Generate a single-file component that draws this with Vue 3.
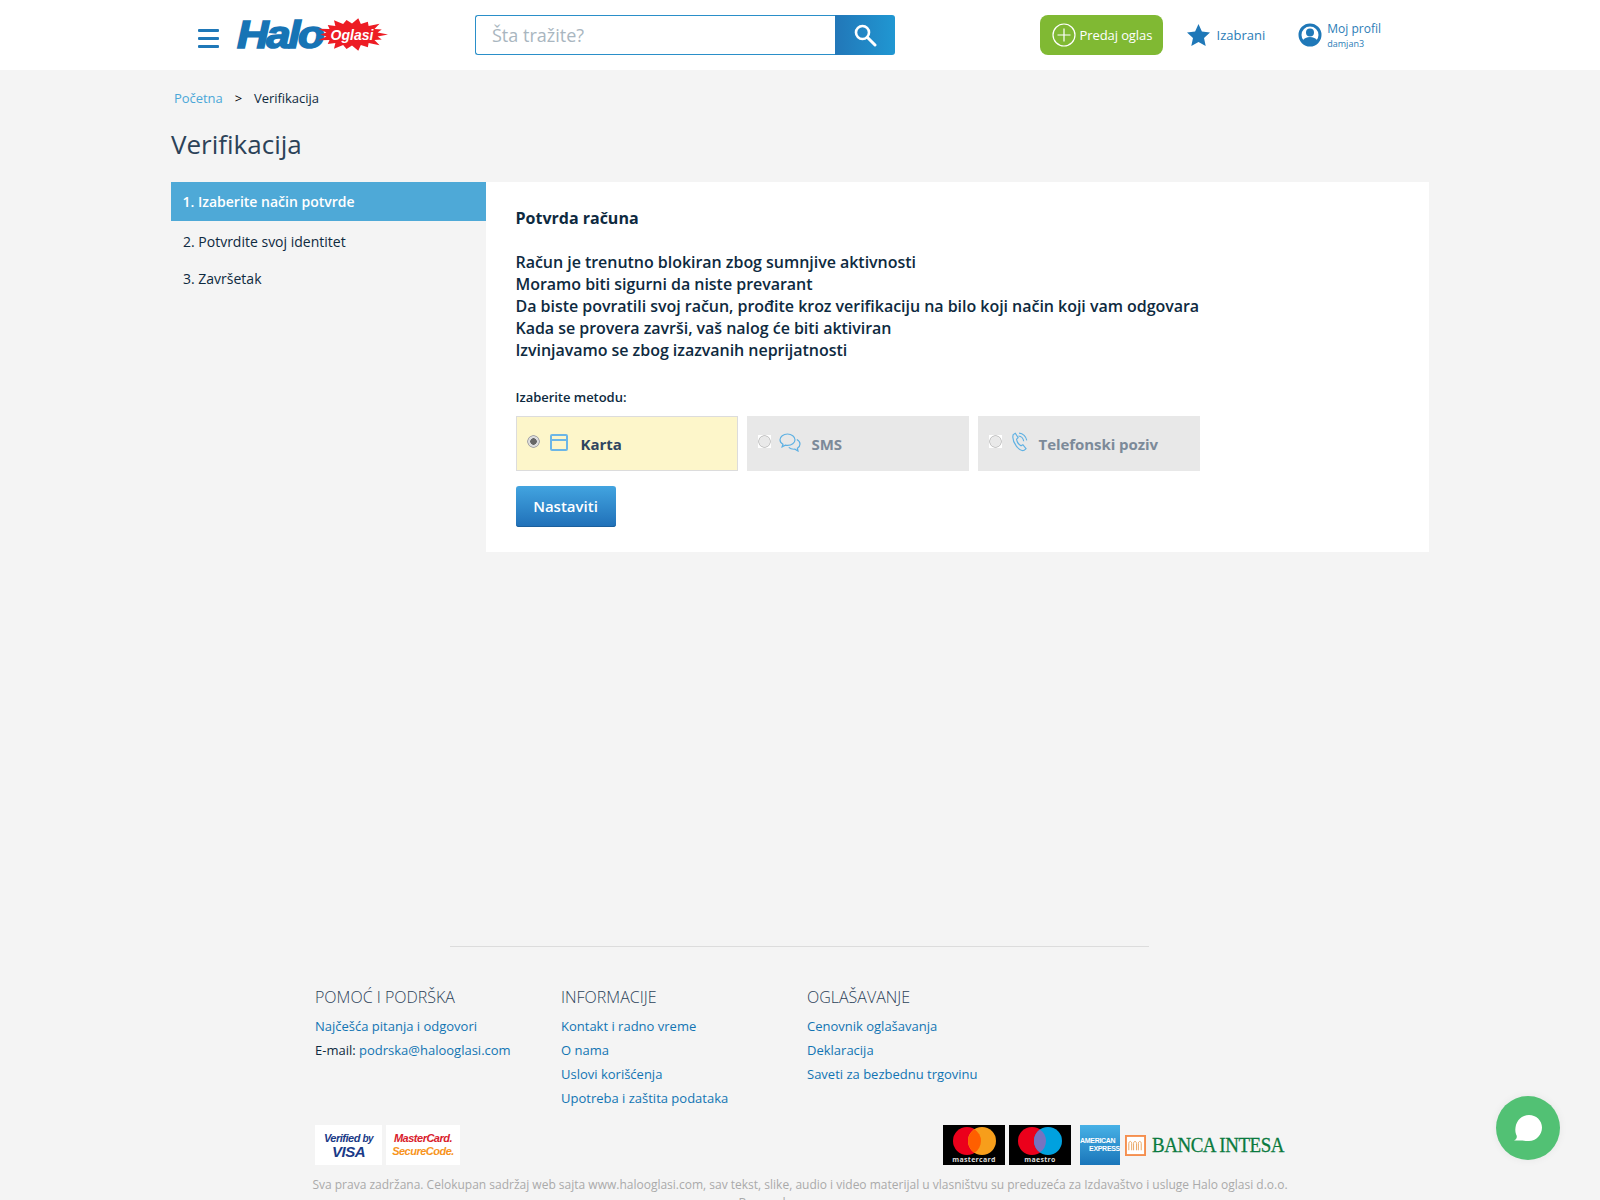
<script setup>
const steps = ['1. Izaberite način potvrde', '2. Potvrdite svoj identitet', '3. Završetak']
const lines = [
  'Račun je trenutno blokiran zbog sumnjive aktivnosti',
  'Moramo biti sigurni da niste prevarant',
  'Da biste povratili svoj račun, prođite kroz verifikaciju na bilo koji način koji vam odgovara',
  'Kada se provera završi, vaš nalog će biti aktiviran',
  'Izvinjavamo se zbog izazvanih neprijatnosti'
]
const burst = (() => {
  const cx = 50, cy = 19, n = 18, pts = []
  for (let i = 0; i < n * 2; i++) {
    const a = (Math.PI * i) / n
    const outer = i % 2 === 0
    const rx = outer ? 50 - (i % 4 === 0 ? 0 : 6) : 36
    const ry = outer ? 18 - (i % 4 === 0 ? 0 : 2) : 12
    pts.push(`${(cx + rx * Math.cos(a)).toFixed(1)},${(cy + ry * Math.sin(a)).toFixed(1)}`)
  }
  return pts.join(' ')
})()
</script>

<template>
  <div class="page">
    <header class="header">
      <div class="logo-side">
        <div class="burger"><i></i><i></i><i></i></div>
        <div class="logo">
          <span class="halo">Halo</span>
          <span class="burst">
            <svg width="72" height="35" viewBox="0 0 100 38" preserveAspectRatio="none"><polygon :points="burst" fill="#ed1c24"/></svg>
            <em>Oglasi</em>
          </span>
        </div>
      </div>
      <div class="search">
        <div class="search-input">Šta tražite?</div>
        <div class="search-btn">
          <svg width="24" height="24" viewBox="0 0 24 24" fill="none" stroke="#fff"><circle cx="9.5" cy="9.5" r="6.5" stroke-width="2.6"/><path d="M14.5 14.5 22 22" stroke-width="3" stroke-linecap="round"/></svg>
        </div>
      </div>
      <div class="actions">
        <div class="post">
          <svg width="24" height="24" viewBox="0 0 24 24" fill="none" stroke="#fff" stroke-width="1.2"><circle cx="12" cy="12" r="11"/><path d="M12 5.5v13M5.5 12h13"/></svg>
          <span>Predaj oglas</span>
        </div>
        <div class="fav">
          <svg width="25" height="24" viewBox="0 0 25 24"><path d="M12.5 1l3.4 7.6 8.1.9-6 5.500 1.700 8.100-7.200-4.200-7.200 4.200 1.700-8.100-6-5.500 8.100-.9z" fill="#1f78b8"/></svg>
          <span>Izabrani</span>
        </div>
        <div class="profile">
          <svg width="24" height="24" viewBox="0 0 24 24"><circle cx="12" cy="12" r="10" fill="none" stroke="#1f78b8" stroke-width="3"/><circle cx="12" cy="9.500" r="4" fill="#1f78b8"/><path d="M4.500 18c1.500-3 4.500-4 7.500-4s6 1 7.500 4c-2 2.500-4.500 4-7.500 4s-5.500-1.500-7.500-4z" fill="#1f78b8"/></svg>
          <div class="profile-text">
            <span>Moj profil</span>
            <small>damjan3</small>
          </div>
        </div>
      </div>
    </header>

    <div class="container">
      <nav class="crumbs"><a>Početna</a><b>&gt;</b><span>Verifikacija</span></nav>
      <h1>Verifikacija</h1>
      <div class="columns">
        <aside class="steps">
          <div v-for="(s, i) in steps" :key="s" class="step" :class="{ active: i === 0 }">{{ s }}</div>
        </aside>
        <main class="card">
          <h2>Potvrda računa</h2>
          <div class="message">
            <p v-for="l in lines" :key="l">{{ l }}</p>
          </div>
          <div class="method-label">Izaberite metodu:</div>
          <div class="methods">
            <div class="method selected">
              <span class="radio"></span>
              <svg class="ico" width="18" height="17" viewBox="0 0 18 17" fill="none" stroke="#6cb6e6" stroke-width="2"><rect x="1" y="1" width="16" height="15" rx="1"/><path d="M1 6h16" stroke-width="2"/></svg>
              <strong>Karta</strong>
            </div>
            <div class="method">
              <span class="radio"></span>
              <svg class="ico" width="22" height="19" viewBox="0 0 22 19" fill="none" stroke="#5fb1e3" stroke-width="1.200"><path d="M8.500 1C4.400 1 1 3.500 1 6.700c0 1.900 1.200 3.600 3 4.600l-.9 2.600 3.300-1.700c.7.100 1.400.2 2.100.2 4.100 0 7.500-2.500 7.500-5.700S12.600 1 8.500 1z"/><path d="M17.800 6.500c1.900 1 3.200 2.600 3.200 4.500 0 1.700-1 3.200-2.600 4.200l.6 2.800-3.100-1.800c-2.500.2-4.700-.5-6.100-1.900"/></svg>
              <strong>SMS</strong>
            </div>
            <div class="method">
              <span class="radio"></span>
              <svg class="ico" width="19" height="20" viewBox="0 0 18 19" fill="none" stroke="#5fb1e3" stroke-width="1.100"><path d="M3 2.500 5 1.200l2.700 4.100-1.500 1.500c.3 2.300 2 5 4.200 6.300l1.800-1 3 3.700-1.800 1.600C9.500 19 1 10 3 2.500z"/><path d="M8 3.800c2.500.2 4.600 2.400 5 5M8.600 1c3.700.2 6.700 3.400 7.300 7"/></svg>
              <strong>Telefonski poziv</strong>
            </div>
          </div>
          <button class="next">Nastaviti</button>
        </main>
      </div>
    </div>

    <footer class="footer">
      <div class="rule"></div>
      <div class="foot-cols">
        <div class="foot-col">
          <h3>POMOĆ I PODRŠKA</h3>
          <a>Najčešća pitanja i odgovori</a>
          <p>E-mail: <a>podrska@halooglasi.com</a></p>
        </div>
        <div class="foot-col">
          <h3>INFORMACIJE</h3>
          <a>Kontakt i radno vreme</a>
          <a>O nama</a>
          <a>Uslovi korišćenja</a>
          <a>Upotreba i zaštita podataka</a>
        </div>
        <div class="foot-col">
          <h3>OGLAŠAVANJE</h3>
          <a>Cenovnik oglašavanja</a>
          <a>Deklaracija</a>
          <a>Saveti za bezbednu trgovinu</a>
        </div>
      </div>
      <div class="badges">
        <div class="badge-group">
          <div class="badge visa"><span>Verified <i>by</i></span><b>VISA</b></div>
          <div class="badge securecode"><span>MasterCard.</span><b>SecureCode.</b></div>
        </div>
        <div class="badge-group right">
          <div class="card-logo">
            <svg width="62" height="28" viewBox="0 0 62 28"><circle cx="24" cy="14" r="14" fill="#eb001b"/><circle cx="39" cy="14" r="14" fill="#f79e1b"/><path d="M31.500 2.200A14 14 0 0 1 31.500 25.800 14 14 0 0 1 31.500 2.200z" fill="#ff5f00"/></svg>
            <span>mastercard</span>
          </div>
          <div class="card-logo">
            <svg width="62" height="28" viewBox="0 0 62 28"><circle cx="23" cy="14" r="14" fill="#eb001b"/><circle cx="39" cy="14" r="14" fill="#00a1df"/><path d="M31 2.500A14 14 0 0 1 31 25.500 14 14 0 0 1 31 2.500z" fill="#7673c0"/></svg>
            <span>maestro</span>
          </div>
          <div class="amex"><span>AMERICAN</span><span class="ex">EXPRESS</span></div>
          <div class="intesa">
            <svg width="21" height="21" viewBox="0 0 22 22" fill="none"><rect x="1" y="1" width="20" height="20" fill="#fff" stroke="#f58f4f" stroke-width="2"/><path d="M4 16V9c0-3 3-3 3 0v7M9 16V9c0-3 3-3 3 0v7M14 16V9c0-3 3-3 3 0v7" stroke="#e9a25c" stroke-width="1"/></svg>
            <span>BANCA INTESA</span>
          </div>
        </div>
      </div>
      <p class="legal">Sva prava zadržana. Celokupan sadržaj web sajta www.halooglasi.com, sav tekst, slike, audio i video materijal u vlasništvu su preduzeća za Izdavaštvo i usluge Halo oglasi d.o.o. Beograd<span class="legal-tail"></span></p>
    </footer>

    <div class="chat">
      <svg width="28" height="26" viewBox="0 0 28 26"><path d="M15 0c7 0 13 5.300 13 12.500S22 26 15 26c-2 0-4.500 0-6.500-.5H0c2-1 3-2 2.800-4.500C1.500 18.500 1 15.500 1.500 12.500 2.500 5 8 0 15 0z" fill="#fff"/></svg>
    </div>
  </div>
</template>

<style>
html, body { margin: 0; background: #f4f4f4; }
</style>

<style scoped>
.page {
  font-family: "Open Sans", "Noto Sans", sans-serif;
  color: #0e2a40;
  background: #f4f4f4;
  font-size: 14px;
}
.header {
  height: 70px;
  background: #fff;
  display: flex;
  align-items: center;
  padding: 0 219px 0 198px;
}
.logo-side { display: flex; align-items: center; gap: 18px; width: 277px; }
.burger { display: flex; flex-direction: column; gap: 5px; width: 21px; padding-top: 6px; }
.burger i { display: block; height: 3px; background: #1f78b8; border-radius: 1px; }
.logo { position: relative; display: flex; align-items: center; height: 36px; width: 152px; }
.halo {
  font-family: "Liberation Sans", sans-serif;
  font-weight: 700;
  font-style: italic;
  font-size: 38px;
  letter-spacing: -2px;
  color: #1774b5;
  -webkit-text-stroke: 1.600px #1774b5;
  transform: scaleX(1.15);
  transform-origin: left center;
}
.burst { position: absolute; left: 79px; top: 0; width: 72px; height: 35px; display: flex; align-items: center; justify-content: center; }
.burst svg { position: absolute; inset: 0; }
.burst em {
  position: relative;
  font-family: "Liberation Sans", sans-serif;
  font-weight: 700;
  font-size: 14px;
  color: #fff;
}
.search { display: flex; width: 420px; height: 40px; }
.search-input {
  flex: 1;
  border: 1px solid #2a8fc9;
  border-right: 0;
  border-radius: 3px 0 0 3px;
  background: #fff;
  color: #a9b6c0;
  font-size: 18px;
  line-height: 38px;
  padding-left: 16px;
}
.search-btn {
  width: 60px;
  display: flex;
  align-items: center;
  justify-content: center;
  background: linear-gradient(90deg, #2277b8, #2097d2);
  border-radius: 0 3px 3px 0;
}
.actions { display: flex; align-items: center; margin-left: auto; }
.post {
  display: flex;
  align-items: center;
  gap: 4px;
  width: 123px;
  height: 40px;
  box-sizing: border-box;
  padding-left: 12px;
  background: #80b933;
  border-radius: 8px;
  color: #fff;
  font-size: 13px;
  letter-spacing: -0.1px;
}
.fav { display: flex; align-items: center; gap: 6px; margin-left: 23px; color: #2b7cb6; font-size: 13px; }
.profile { display: flex; align-items: center; gap: 5px; margin-left: 33px; color: #2b7cb6; }
.profile-text { display: flex; flex-direction: column; font-size: 12px; line-height: 16px; }
.profile-text small { font-size: 9px; line-height: 12px; margin-top: 1px; }

.container { width: 1258px; margin-left: 171px; }
.crumbs { padding: 19px 0 0 3px; height: 18px; line-height: 18px; font-size: 13px; letter-spacing: -0.05px; display: flex; }
.crumbs a { color: #4ba7d8; }
.crumbs b { font-weight: 400; margin: 0 12px; color: #000; }
h1 { margin: 19px 0 0; font-size: 26px; line-height: 36px; font-weight: 400; color: #2c4258; height: 36px; }
.columns { display: flex; margin-top: 20px; }
.steps { width: 315px; }
.step { height: 37px; line-height: 37px; padding-left: 12px; font-size: 14px; }
.step.active { height: 39px; line-height: 39px; margin-bottom: 2px; padding-left: 11.500px; background: #4ea9d7; color: #fff; font-weight: 600; }
.card { flex: 1; height: 370px; box-sizing: border-box; background: #fff; padding: 25px 30px 25px 29.500px; }
h2 { margin: 0; font-size: 16px; line-height: 22px; font-weight: 700; color: #0e2a40; }
.message { margin-top: 22px; font-size: 16px; line-height: 22px; font-weight: 600; color: #0e2a40; letter-spacing: -0.035px; }
.message p { margin: 0; }
.method-label { margin-top: 27px; font-size: 13px; line-height: 18px; font-weight: 600; letter-spacing: -0.03px; }
.methods { display: flex; gap: 9px; margin-top: 10px; }
.method {
  position: relative;
  width: 222px;
  height: 55px;
  box-sizing: border-box;
  background: #e8e8e8;
  display: flex;
  align-items: center;
  color: #7c8a99;
  font-size: 15px;
}
.method.selected { background: #fdf6ca; border: 1px solid #dcdcdc; color: #2f4560; }
.radio {
  position: absolute;
  left: 11px;
  top: 19px;
  width: 13px;
  height: 13px;
  background: radial-gradient(circle, #e9e9e9 0 5px, #c9c9c9 5.500px 6px, #fff 6.500px);
}
.method.selected .radio {
  left: 10px;
  top: 18px;
  background: radial-gradient(circle, #666 0 3px, #dcdcdc 3.500px 5px, #aaa 5.500px 6px, #fdf6ca 6.500px);
}
.ico { position: absolute; left: 33px; top: 17px; }
.method strong { font-weight: 700; margin-left: 65px; letter-spacing: -0.05px; }
.method.selected strong { margin-left: 64px; }
.method:nth-child(3) strong { margin-left: 61px; }
.method:nth-child(3) .ico { left: 32px; top: 16px; }
.method:nth-child(2) .ico { left: 32px; top: 17px; }
.next {
  display: block;
  margin-top: 15px;
  width: 100px;
  height: 41px;
  padding: 0 0 2px;
  border: 0;
  border-radius: 3px;
  background: linear-gradient(180deg, #42a4e0, #2070b8);
  box-shadow: inset 0 -1px 0 #1b5f9c;
  color: #fff;
  font-family: inherit;
  font-size: 15px;
  font-weight: 600;
}

.footer { margin-top: 394px; padding-bottom: 20px; }
.rule { width: 699px; height: 1px; background: #dcdcdc; margin-left: 450px; }
.foot-cols { display: flex; margin: 39px 0 0 315px; }
.foot-col { width: 246px; display: flex; flex-direction: column; align-items: flex-start; font-size: 13px; line-height: 24px; }
.foot-col h3 { margin: 0 0 6px; font-size: 16px; line-height: 22px; font-weight: 300; color: #2c4258; }
.foot-col a { color: #1274b3; }
.foot-col p { margin: 0; }
.badges { display: flex; justify-content: space-between; margin: 15px 316px 0 315px; height: 40px; }
.badge-group { display: flex; gap: 4px; }
.badge-group.right { gap: 0; align-items: center; }
.badge {
  background: #fff;
  height: 40px;
  display: flex;
  flex-direction: column;
  align-items: center;
  justify-content: center;
  font-family: "Liberation Sans", sans-serif;
  font-style: italic;
  font-weight: 700;
  line-height: 13px;
}
.visa { width: 67px; font-size: 11px; color: #1a3a87; letter-spacing: -0.500px; }
.visa b { font-size: 15px; }
.visa i { font-size: 10px; }
.securecode { width: 74px; font-size: 11px; color: #d9202c; letter-spacing: -0.500px; }
.securecode b { color: #f7941d; }
.card-logo {
  width: 62px;
  height: 40px;
  box-sizing: border-box;
  padding-top: 2px;
  background: #000;
  display: flex;
  flex-direction: column;
  align-items: center;
  color: #ddd;
  font-size: 7px;
  line-height: 9px;
  font-weight: 700;
  letter-spacing: .3px;
  margin-right: 4px;
}
.amex {
  width: 40px;
  height: 40px;
  margin-left: 5px;
  background: linear-gradient(180deg, #47b1e6, #1a76ba);
  color: #fff;
  font-family: "Liberation Sans", sans-serif;
  font-size: 7px;
  line-height: 8px;
  font-weight: 700;
  display: flex;
  flex-direction: column;
  justify-content: center;
  letter-spacing: -0.300px;
}
.amex .ex { text-align: right; }
.intesa { display: flex; align-items: center; gap: 6px; margin-left: 5px; }
.intesa span {
  width: 132px;
  font-family: "Liberation Serif", serif;
  font-size: 22px;
  color: #0a7a3e;
  letter-spacing: -0.500px;
  -webkit-text-stroke: 0.300px #0a7a3e;
  white-space: nowrap;
  transform: scaleX(.86);
  transform-origin: left center;
}
.legal {
  margin: 11px auto 0;
  width: 980px;
  text-align: center;
  color: #aaa;
  font-size: 12px;
  line-height: 18px;
}
.legal-tail { display: inline-block; width: 76px; }
.chat {
  position: fixed;
  left: 1496px;
  top: 1096px;
  width: 64px;
  height: 64px;
  border-radius: 50%;
  background: #52c174;
  display: flex;
  align-items: center;
  justify-content: center;
  box-shadow: 0 0 8px rgba(0,0,0,.06);
}
</style>
